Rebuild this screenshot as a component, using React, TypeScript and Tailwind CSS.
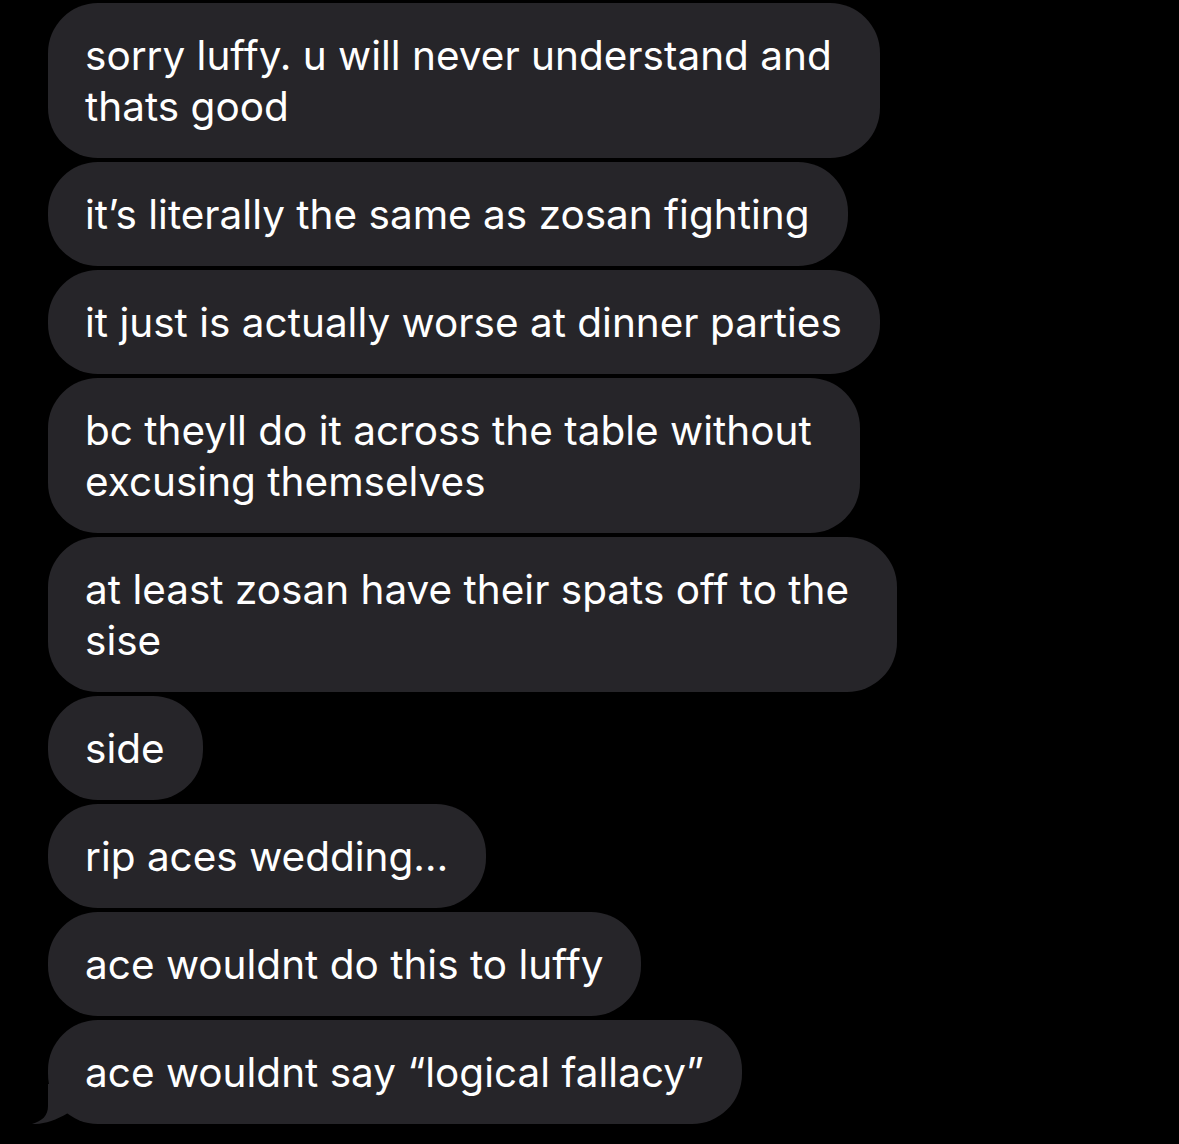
const messages: string[][] = [
  ['sorry luffy. u will never understand and', 'thats good'],
  ['it\u2019s literally the same as zosan fighting'],
  ['it just is actually worse at dinner parties'],
  ['bc theyll do it across the table without', 'excusing themselves'],
  ['at least zosan have their spats off to the', 'sise'],
  ['side'],
  ['rip aces wedding\u2026'],
  ['ace wouldnt do this to luffy'],
  ['ace wouldnt say \u201clogical fallacy\u201d'],
];

function Bubble({ lines, tail }: { lines: string[]; tail?: boolean }) {
  // wrapped bubbles keep a little extra room on the right, like iOS
  const pad = lines.length > 1 ? 'pr-[48px]' : 'pr-[38px]';
  return (
    <div className="relative self-start">
      <div className={`rounded-[50px] bg-[#262529] pl-[37px] ${pad} pt-[27px] pb-[26px] text-[40.5px] leading-[51px] text-white whitespace-nowrap`}>
        {lines.map((l, i) => (
          <div key={i}>{l}</div>
        ))}
      </div>
      {tail && (
        <svg className="absolute -left-[18px] bottom-0" width="40" height="40" viewBox="0 0 40 40">
          <path d="M18 0 L18 22 C18 32 12 37 2 40 C12 40.5 25 37 38 29 L38 0 Z" fill="#262529" />
        </svg>
      )}
    </div>
  );
}

export default function App() {
  return (
    <div className="w-[1179px] h-[1144px] bg-black overflow-hidden" style={{ fontFamily: 'Inter, "Noto Sans", sans-serif' }}>
      <div className="flex flex-col gap-1 pl-[48px] pt-[3px]">
        {messages.map((m, i) => (
          <Bubble key={i} lines={m} tail={i === messages.length - 1} />
        ))}
      </div>
    </div>
  );
}
